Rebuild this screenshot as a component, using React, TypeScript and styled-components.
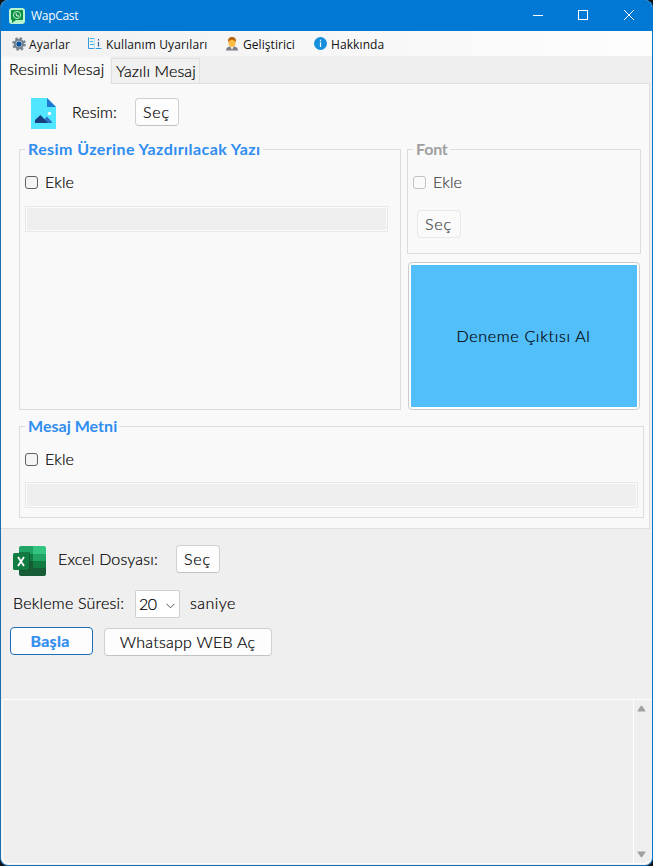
import React from "react";
import styled, { createGlobalStyle, css } from "styled-components";

const Global = createGlobalStyle`
  * { box-sizing: border-box; }
  html, body { margin: 0; padding: 0; background: #10151c; }
`;

const Window = styled.main`
  width: 653px;
  height: 866px;
  display: flex;
  flex-direction: column;
  overflow: hidden;
  border: 1px solid #1b6fb5;
  border-top: 0;
  border-right-color: #0078d4;
  border-radius: 8px;
  background: #efefef;
  color: #000;
  font-family: Lato, "Liberation Sans", sans-serif;
  font-size: 16px;
  font-weight: 300;
  line-height: 20px;
`;

const TitleBar = styled.header`
  height: 31px;
  flex: none;
  display: flex;
  align-items: center;
  margin: 0 -1px;
  padding: 0 1px 0 9px;
  background: #0078d4;
  color: #fff;
`;

const Title = styled.h1`
  flex: 1;
  margin: 1px 0 0 6px;
  font: 400 12px/16px "Open Sans", sans-serif;
  letter-spacing: -0.3px;
`;

const Caption = styled.button<{ $w: number }>`
  width: ${(p) => p.$w}px;
  height: 31px;
  display: grid;
  place-items: center;
  border: 0;
  padding: 0 0 1px;
  background: none;
  color: #fff;
`;

const MenuBar = styled.nav`
  height: 25px;
  flex: none;
  display: flex;
  padding-left: 11px;
  background: linear-gradient(90deg, #f1f1f1, #fdfdfd);
`;

const MenuItem = styled.a<{ $gap: number; $w: number; $ls: number }>`
  display: flex;
  align-items: center;
  gap: ${(p) => p.$gap}px;
  width: ${(p) => p.$w}px;
  flex: none;
  color: #111;
  white-space: nowrap;
  font: 400 12px/16px "Open Sans", sans-serif;
  letter-spacing: ${(p) => p.$ls}px;
  svg { flex: none; }
  span { padding-top: 2px; }
`;

const Text = styled.span<{ $ls?: number }>`
  display: block;
  white-space: nowrap;
  letter-spacing: ${(p) => p.$ls ?? 0}px;
  -webkit-text-stroke: 0.2px currentColor;
`;

const Tabs = styled.div`
  height: 27px;
  flex: none;
  display: flex;
  align-items: flex-end;
`;

const Tab = styled.button<{ $active?: boolean }>`
  font: inherit;
  color: inherit;
  text-align: left;
  border: 1px solid #e0e0e0;
  border-bottom: 0;
  ${(p) =>
    p.$active
      ? css`width: 110px; height: 28px; margin-bottom: -1px; padding: 2px 0 5px 7px; background: #f9f9f9; border-color: #f4f4f4; z-index: 1;`
      : css`width: 89px; height: 25px; padding: 2px 0 2px 4px; background: #f1f1f1;`}
`;

const Page = styled.section`
  width: 649px;
  height: 446px;
  flex: none;
  border: 1px solid #dfdfdf;
  border-left: 0;
  background: #f9f9f9;
  padding: 14px 5px 0 18px;
`;

const Row = styled.div<{ $h: number; $pl?: number }>`
  display: flex;
  align-items: flex-start;
  height: ${(p) => p.$h}px;
  padding-left: ${(p) => p.$pl ?? 0}px;
`;

const Slot = styled.div<{ $w: number; $top?: number }>`
  width: ${(p) => p.$w}px;
  flex: none;
  padding-top: ${(p) => p.$top ?? 0}px;
  svg { display: block; }
`;

const Button = styled.button<{ $w: number; $kind?: "primary" | "disabled" }>`
  width: ${(p) => p.$w}px;
  height: 28px;
  flex: none;
  display: flex;
  justify-content: center;
  padding: 3px 1px 0 0;
  border: 1px solid #d0d0d0;
  border-bottom-color: #c2c2c2;
  border-radius: 4px;
  background: #fdfdfd;
  color: #000;
  font: inherit;
  ${(p) => p.$kind === "primary" && css`padding-right: 3px; border-color: #1a6fb8; color: #2f8df0; font-weight: 700;`}
  ${(p) => p.$kind === "disabled" && css`margin: 18px 0 0 4px; border-color: #e8e8e8; background: #fafafa; color: #444;`}
`;

const Columns = styled.div`
  display: flex;
  gap: 6px;
`;

const Group = styled.section<{ $w: number; $h: number; $muted?: boolean }>`
  width: ${(p) => p.$w}px;
  height: ${(p) => p.$h}px;
  flex: none;
  border: 1px solid #dcdcdc;
  padding-left: 5px;
  color: ${(p) => (p.$muted ? "#444" : "#000")};
`;

const MessageGroup = styled(Group)`
  margin-top: 16px;
`;

const Legend = styled.h2<{ $muted?: boolean; $ls: number }>`
  width: fit-content;
  margin: -11px 0 0 0;
  padding: 0 2px 0 3px;
  background: #f9f9f9;
  font-size: 16px;
  line-height: 20px;
  font-weight: 700;
  white-space: nowrap;
  letter-spacing: ${(p) => p.$ls}px;
  color: ${(p) => (p.$muted ? "#a0a0a0" : "#2f8df0")};
`;

const Check = styled.label`
  display: flex;
  margin-top: 13px;
  gap: 7px;
`;

const Box = styled.span<{ $muted?: boolean }>`
  width: 13px;
  height: 13px;
  margin-top: 4px;
  border: 1px solid ${(p) => (p.$muted ? "#c3c3c3" : "#606060")};
  border-radius: 3px;
  background: ${(p) => (p.$muted ? "#fafafa" : "#f4f4f4")};
`;

const Field = styled.div<{ $w: number; $top: number }>`
  width: ${(p) => p.$w}px;
  height: 26px;
  margin-top: ${(p) => p.$top}px;
  border: 1px solid #e8e8e8;
  padding: 1px;
  background: linear-gradient(#efefef, #efefef) content-box, #fbfbfb;
`;

const Preview = styled.button`
  display: block;
  width: 232px;
  height: 148px;
  margin: 8px 0 0 1px;
  padding: 2px;
  border: 1px solid #cbcbcb;
  border-radius: 4px;
  background: #fff;
  font: inherit;
  color: #000;
`;

const PreviewFill = styled.span`
  display: flex;
  justify-content: center;
  height: 142px;
  padding: 61px 1px 0 0;
  background: #52befa;
`;

const Controls = styled.section`
  height: 170px;
  flex: none;
  padding: 16px 0 0 9px;
`;

const Select = styled.div`
  width: 45px;
  height: 28px;
  flex: none;
  display: flex;
  align-items: flex-start;
  justify-content: space-between;
  margin-right: 10px;
  padding: 3px 4px 0 3px;
  border: 1px solid #cfcfcf;
  border-radius: 2px;
  background: #fff;
  svg { margin-top: 9px; }
`;

const Actions = styled.div`
  display: flex;
  align-items: flex-start;
  gap: 11px;
  button + button { margin-top: 1px; }
`;

const Log = styled.section`
  flex: 1;
  display: flex;
  justify-content: flex-end;
  margin: 0 1px 1px;
  border: 1px solid #fff;
  border-right: 0;
  border-radius: 0 0 7px 7px;
`;

const ScrollBar = styled.div`
  width: 18px;
  display: flex;
  flex-direction: column;
  justify-content: space-between;
  align-items: center;
  padding: 5px 2px 5px 0;
  border-left: 1px solid #fff;
`;

const AppIcon = () => (
  <svg width="16" height="16" viewBox="0 0 16 16">
    <rect width="16" height="16" rx="3" fill="#b9f5cc" />
    <path d="M3 2h10q1 0 1 1v8q0 1-1 1H7l-4 3v-3q-1 0-1-1V3q0-1 1-1Z" fill="#0d8f43" />
    <circle cx="8" cy="7" r="3.6" fill="none" stroke="#c9f7d7" strokeWidth=".9" />
    <path d="M6.500 5.400q0 3 3 3.300l.6-.9-1-.6-.6.4-1-1 .4-.7-.6-.9Z" fill="#e3ffec" />
  </svg>
);

const GearIcon = () => (
  <svg width="14" height="14" viewBox="0 0 14 14">
    <circle cx="7" cy="7" r="5.600" fill="none" stroke="#76838d" strokeWidth="2.400" strokeDasharray="2.400 2" />
    <circle cx="7" cy="7" r="4.200" fill="#c3d2dc" stroke="#74818b" strokeWidth="2" />
    <circle cx="7" cy="7" r="2.600" fill="#0b4f9c" />
  </svg>
);

const GuideIcon = () => (
  <svg width="14" height="13" viewBox="0 0 14 13">
    <path d="M.5 .5v11H6M13.500 11.500H7.500" stroke="#2f9ad6" fill="none" />
    <path d="M2 1.500h4M2 4.500h3M2 7.500h4" stroke="#35b8ea" />
    <path d="M10.500 2v1.500M10.500 5v4.500" stroke="#2f57a5" strokeWidth="1.200" />
    <path d="M6.500 1v11" stroke="#a5dcf4" strokeWidth=".8" />
  </svg>
);

const PersonIcon = () => (
  <svg width="12" height="14" viewBox="0 0 12 14">
    <path d="M0 13.500q0-3.500 4-4h4q4 .5 4 4Z" fill="#7b7f86" />
    <path d="M4.200 9 6 13l1.800-4Z" fill="#fff" />
    <path d="M2.200 5Q1.500 0 6 0t3.800 5Z" fill="#b86413" />
    <ellipse cx="6" cy="5.800" rx="3.500" ry="4.300" fill="#fdbb42" />
    <path d="M2.300 4.500Q2.500 .5 6 .5t3.700 4Q7.500 2.800 6 2.800T2.300 4.500Z" fill="#b86413" />
  </svg>
);

const InfoIcon = () => (
  <svg width="13" height="13" viewBox="0 0 13 13">
    <circle cx="6.500" cy="6.500" r="6.500" fill="#168fdc" />
    <path d="M6.500 2.800v1.400M6.500 5.200v4.800" stroke="#fff" strokeWidth="1.200" />
  </svg>
);

const ImageIcon = () => (
  <svg width="25" height="31" viewBox="0 0 25 31">
    <path d="M0 0h16l9 9v22H0Z" fill="#50e6ff" />
    <path d="M16 0l9 9h-9Z" fill="#1f78d0" />
    <path d="M11 24l5-5.500L21 24v1h-7Z" fill="#2a72c4" />
    <path d="M4 25v-3l5.500-5 7.500 8Z" fill="#173f7d" />
    <circle cx="18.500" cy="15.500" r="1.700" fill="#fff" />
  </svg>
);

const ExcelIcon = () => (
  <svg width="33" height="30" viewBox="0 0 33 30">
    <path d="M8 0h12v8H6V2q0-2 2-2Z" fill="#21a366" />
    <path d="M20 0h11q2 0 2 2v6H20Z" fill="#33c481" />
    <path d="M6 8h14v7H6Z" fill="#107c41" />
    <path d="M20 8h13v7H20Z" fill="#21a366" />
    <path d="M6 15h14v7H6Z" fill="#185c37" />
    <path d="M20 15h13v7H20Z" fill="#107c41" />
    <path d="M6 22h27v6q0 2-2 2H8q-2 0-2-2Z" fill="#185c37" />
    <path d="M6 6h11v17q0 2-2 2H6Z" fill="#0b4a29" opacity=".5" />
    <rect y="7" width="16" height="17" rx="1.500" fill="#107c41" />
    <path d="M5 11l6 9M11 11l-6 9" stroke="#fff" strokeWidth="1.800" />
  </svg>
);

const Chevron = () => (
  <svg width="9" height="6" viewBox="0 0 9 6">
    <path d="M.5 .8l4 4 4-4" fill="none" stroke="#555" />
  </svg>
);

const Arrow = ({ down }: { down?: boolean }) => (
  <svg width="9" height="7" viewBox="0 0 9 7">
    <path d={down ? "M1 .5h7q.8 0 .4.8L5.200 6q-.7.800-1.400 0L.6 1.300Q.2.500 1 .5Z" : "M1 6.500h7q.8 0 .4-.8L5.200 1q-.7-.8-1.400 0L.6 5.700q-.4.800.4.800Z"} fill="#a0a0a0" />
  </svg>
);

export default function App() {
  return (
    <>
      <Global />
      <Window>
        <TitleBar>
          <AppIcon />
          <Title>WapCast</Title>
          <Caption $w={45} aria-label="Minimize"><svg width="10" height="10"><path d="M0 5.500h10" stroke="currentColor" /></svg></Caption>
          <Caption $w={46} aria-label="Maximize"><svg width="10" height="10"><rect x=".5" y=".5" width="9" height="9" fill="none" stroke="currentColor" /></svg></Caption>
          <Caption $w={46} aria-label="Close"><svg width="10" height="10"><path d="M0 0l10 10M10 0L0 10" stroke="currentColor" /></svg></Caption>
        </TitleBar>
        <MenuBar>
          <MenuItem $gap={3} $w={76} $ls={0.2}><GearIcon /><span>Ayarlar</span></MenuItem>
          <MenuItem $gap={4} $w={138} $ls={0.13}><GuideIcon /><span>Kullanım Uyarıları</span></MenuItem>
          <MenuItem $gap={5} $w={88} $ls={0.06}><PersonIcon /><span>Geliştirici</span></MenuItem>
          <MenuItem $gap={4} $w={87} $ls={0.1}><InfoIcon /><span>Hakkında</span></MenuItem>
        </MenuBar>
        <Tabs>
          <Tab $active><Text $ls={0.2}>Resimli Mesaj</Text></Tab>
          <Tab><Text $ls={0.13}>Yazılı Mesaj</Text></Tab>
        </Tabs>
        <Page>
          <Row $h={51} $pl={12}>
            <Slot $w={41}><ImageIcon /></Slot>
            <Slot $w={63} $top={4}><Text $ls={0.05}>Resim:</Text></Slot>
            <Button $w={44}><Text $ls={0.9}>Seç</Text></Button>
          </Row>
          <Columns>
            <Group $w={382} $h={261}>
              <Legend $ls={0.41}>Resim Üzerine Yazdırılacak Yazı</Legend>
              <Check><Box /><Text $ls={0.1}>Ekle</Text></Check>
              <Field $w={363} $top={14} />
            </Group>
            <div>
              <Group $w={234} $h={105} $muted>
                <Legend $muted $ls={-0.2}>Font</Legend>
                <Check><Box $muted /><Text $ls={0.1}>Ekle</Text></Check>
                <Button $w={44} $kind="disabled"><Text $ls={0.9}>Seç</Text></Button>
              </Group>
              <Preview><PreviewFill><Text $ls={0.7}>Deneme Çıktısı Al</Text></PreviewFill></Preview>
            </div>
          </Columns>
          <MessageGroup $w={625} $h={92}>
            <Legend $ls={0.03}>Mesaj Metni</Legend>
            <Check><Box /><Text $ls={0.1}>Ekle</Text></Check>
            <Field $w={613} $top={13} />
          </MessageGroup>
        </Page>
        <Controls>
          <Row $h={45} $pl={3}>
            <Slot $w={45} $top={1}><ExcelIcon /></Slot>
            <Slot $w={118} $top={4}><Text $ls={0.18}>Excel Dosyası:</Text></Slot>
            <Button $w={44}><Text $ls={0.9}>Seç</Text></Button>
          </Row>
          <Row $h={37} $pl={3}>
            <Slot $w={122} $top={3}><Text $ls={0.2}>Bekleme Süresi:</Text></Slot>
            <Select><Text $ls={-0.5}>20</Text><Chevron /></Select>
            <Slot $w={50} $top={3}><Text $ls={0.45}>saniye</Text></Slot>
          </Row>
          <Actions>
            <Button $w={83} $kind="primary"><Text $ls={0.3}>Başla</Text></Button>
            <Button $w={168}><Text $ls={0.25}>Whatsapp WEB Aç</Text></Button>
          </Actions>
        </Controls>
        <Log>
          <ScrollBar><Arrow /><Arrow down /></ScrollBar>
        </Log>
      </Window>
    </>
  );
}
